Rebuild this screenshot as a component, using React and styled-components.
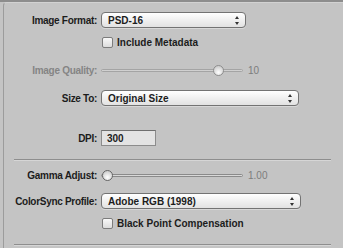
import React from "react";
import styled, { createGlobalStyle } from "styled-components";

const Global = createGlobalStyle`
  html, body {
    margin: 0;
    padding: 0;
    background: #c4c4c4;
  }
  body {
    font-family: "Liberation Sans", Arial, sans-serif;
  }
`;

const Frame = styled.div`
  width: 343px;
  height: 248px;
  box-sizing: border-box;
  border-top: 2px solid #8d8d8d;
  background: #c4c4c4;
  overflow: hidden;
`;

const Panel = styled.div`
  margin-left: 3px;
  height: 100%;
  box-sizing: border-box;
  border-left: 1px solid #9c9c9c;
  border-top: 1px solid #d2d2d2;
  border-top-left-radius: 4px;
  padding-top: 9px;
  display: flex;
  flex-direction: column;
`;

const Row = styled.div`
  display: grid;
  grid-template-columns: 93px 1fr;
  column-gap: 4px;
  align-items: center;
  height: ${(p) => p.$h}px;
  margin-top: ${(p) => p.$top || 0}px;
`;

const Label = styled.div`
  text-align: right;
  font-size: 10px;
  font-weight: bold;
  letter-spacing: -0.3px;
  color: ${(p) => (p.$disabled ? "#858585" : "#1c1c1c")};
  white-space: nowrap;
`;

const Popup = styled.div`
  position: relative;
  width: ${(p) => p.$w}px;
  height: 16px;
  box-sizing: border-box;
  border: 1px solid #737373;
  border-radius: 4px;
  background: linear-gradient(#ffffff, #f0f0f0 50%, #e2e2e2);
  box-shadow: 0 1px 0 rgba(255, 255, 255, 0.35);
  display: flex;
  align-items: center;
  padding-left: 6px;
  font-size: 10px;
  font-weight: bold;
  color: #1c1c1c;
`;

const Arrows = styled.svg`
  position: absolute;
  right: 6px;
  top: 3px;
`;

const CheckLine = styled.label`
  display: flex;
  align-items: center;
  gap: 4px;
  font-size: 10px;
  font-weight: bold;
  color: #1c1c1c;
`;

const Box = styled.span`
  width: 11px;
  height: 11px;
  box-sizing: border-box;
  border: 1px solid #7c7c7c;
  border-radius: 2px;
  background: linear-gradient(#f8f8f8, #dcdcdc);
  margin-left: 1px;
`;

const SliderLine = styled.div`
  display: flex;
  align-items: center;
  gap: 5px;
`;

const Track = styled.div`
  position: relative;
  width: 142px;
  height: 3px;
  box-sizing: border-box;
  border: 1px solid ${(p) => (p.$disabled ? "#a4a4a4" : "#8a8a8a")};
  border-radius: 2px;
  background: ${(p) => (p.$disabled ? "#d0d0d0" : "#d8d8d8")};
`;

const Thumb = styled.span`
  position: absolute;
  top: -5px;
  left: ${(p) => p.$x}px;
  width: 11px;
  height: 11px;
  box-sizing: border-box;
  border-radius: 50%;
  border: 1px solid ${(p) => (p.$disabled ? "#8e8e8e" : "#666666")};
  background: radial-gradient(circle at 50% 70%, #ffffff, #cfcfcf 75%);
`;

const Value = styled.span`
  font-size: 10px;
  color: #7d7d7d;
`;

const Field = styled.div`
  width: 55px;
  height: 16px;
  box-sizing: border-box;
  border: 1px solid #8c8c8c;
  border-top-color: #6f6f6f;
  background: #e3e3e3;
  padding-left: 5px;
  font-size: 10px;
  font-weight: bold;
  color: #1c1c1c;
  display: flex;
  align-items: center;
`;

const Rule = styled.div`
  margin: ${(p) => p.$top}px 12px 0 10px;
  height: 1px;
  background: #8e8e8e;
  box-shadow: 0 1px 0 #d6d6d6;
`;

const UpDown = () => (
  <Arrows width="4" height="9" viewBox="0 0 4 9">
    <path d="M2 0 L4 3 L0 3 Z M0 6 L4 6 L2 9 Z" fill="#333" />
  </Arrows>
);

const Select = ({ width, children }) => (
  <Popup $w={width}>
    {children}
    <UpDown />
  </Popup>
);

const Slider = ({ pos, value, disabled }) => (
  <SliderLine>
    <Track $disabled={disabled}>
      <Thumb $x={pos} $disabled={disabled} />
    </Track>
    <Value>{value}</Value>
  </SliderLine>
);

export default function App() {
  return (
    <>
      <Global />
      <Frame>
        <Panel>
          <Row $h={16}>
            <Label>Image Format:</Label>
            <Select width={145}>PSD-16</Select>
          </Row>
          <Row $h={12} $top={8}>
            <span />
            <CheckLine>
              <Box />
              Include Metadata
            </CheckLine>
          </Row>
          <Row $h={12} $top={16}>
            <Label $disabled>Image Quality:</Label>
            <Slider pos={111} value="10" disabled />
          </Row>
          <Row $h={16} $top={14}>
            <Label>Size To:</Label>
            <Select width={198}>Original Size</Select>
          </Row>
          <Row $h={16} $top={24}>
            <Label>DPI:</Label>
            <Field>300</Field>
          </Row>
          <Rule $top={13} />
          <Row $h={12} $top={9}>
            <Label>Gamma Adjust:</Label>
            <Slider pos={0} value="1.00" />
          </Row>
          <Row $h={16} $top={12}>
            <Label>ColorSync Profile:</Label>
            <Select width={200}>Adobe RGB (1998)</Select>
          </Row>
          <Row $h={12} $top={8}>
            <span />
            <CheckLine>
              <Box />
              Black Point Compensation
            </CheckLine>
          </Row>
          <Rule $top={15} />
        </Panel>
      </Frame>
    </>
  );
}
